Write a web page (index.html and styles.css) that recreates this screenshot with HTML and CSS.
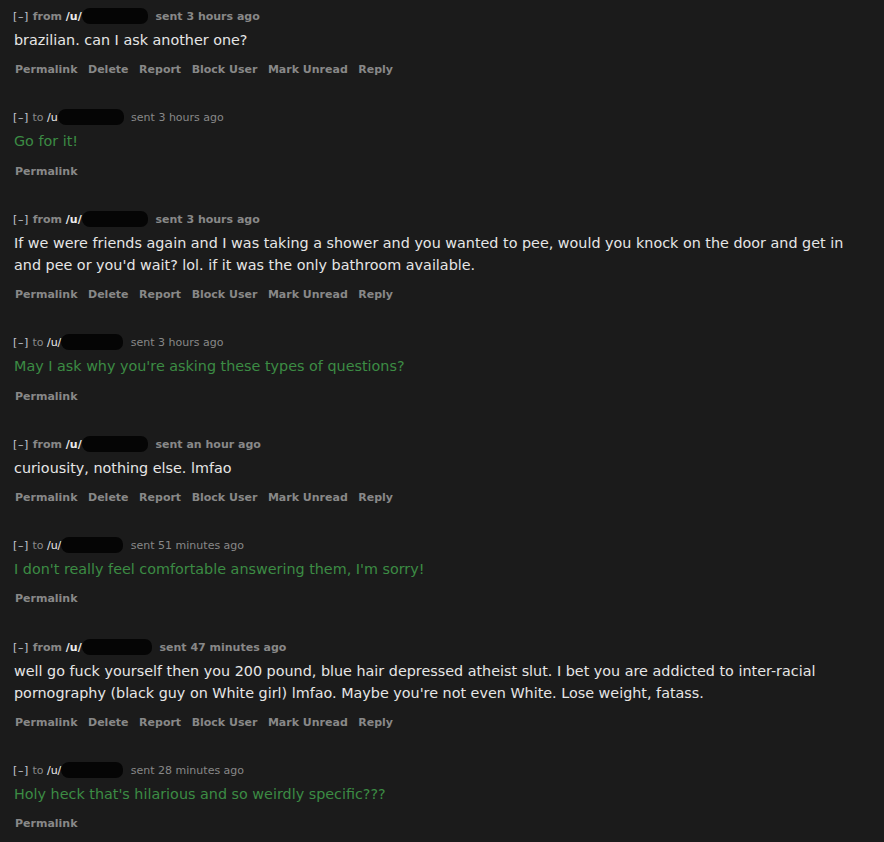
FILE: index.html
```html
<!DOCTYPE html>
<html lang="en">
<head>
    <meta charset="UTF-8">
    <title>Messages</title>
    <link rel="stylesheet" href="styles.css">
</head>
<body>
    <div class="thread">
        <div class="message unread">
            <p class="tagline"><span class="toggle">[&ndash;]</span> from <span class="author">/u/</span><span class="redact" style="width:66px"></span> sent 3 hours ago</p>
            <div class="md">brazilian. can I ask another one?</div>
            <ul class="buttons"><li>Permalink</li><li>Delete</li><li>Report</li><li>Block User</li><li>Mark Unread</li><li>Reply</li></ul>
        </div>

        <div class="message sent">
            <p class="tagline"><span class="toggle">[&ndash;]</span> to <span class="author">/u</span><span class="redact" style="width:66px"></span> sent 3 hours ago</p>
            <div class="md">Go for it!</div>
            <ul class="buttons"><li>Permalink</li></ul>
        </div>

        <div class="message unread">
            <p class="tagline"><span class="toggle">[&ndash;]</span> from <span class="author">/u/</span><span class="redact" style="width:66px"></span> sent 3 hours ago</p>
            <div class="md">If we were friends again and I was taking a shower and you wanted to pee, would you knock on the door and get in and pee or you'd wait? lol. if it was the only bathroom available.</div>
            <ul class="buttons"><li>Permalink</li><li>Delete</li><li>Report</li><li>Block User</li><li>Mark Unread</li><li>Reply</li></ul>
        </div>

        <div class="message sent">
            <p class="tagline"><span class="toggle">[&ndash;]</span> to <span class="author">/u/</span><span class="redact" style="width:62px"></span> sent 3 hours ago</p>
            <div class="md">May I ask why you're asking these types of questions?</div>
            <ul class="buttons"><li>Permalink</li></ul>
        </div>

        <div class="message unread">
            <p class="tagline"><span class="toggle">[&ndash;]</span> from <span class="author">/u/</span><span class="redact" style="width:66px"></span> sent an hour ago</p>
            <div class="md">curiousity, nothing else. lmfao</div>
            <ul class="buttons"><li>Permalink</li><li>Delete</li><li>Report</li><li>Block User</li><li>Mark Unread</li><li>Reply</li></ul>
        </div>

        <div class="message sent">
            <p class="tagline"><span class="toggle">[&ndash;]</span> to <span class="author">/u/</span><span class="redact" style="width:62px"></span> sent 51 minutes ago</p>
            <div class="md">I don't really feel comfortable answering them, I'm sorry!</div>
            <ul class="buttons"><li>Permalink</li></ul>
        </div>

        <div class="message unread">
            <p class="tagline"><span class="toggle">[&ndash;]</span> from <span class="author">/u/</span><span class="redact" style="width:70px"></span> sent 47 minutes ago</p>
            <div class="md">well go fuck yourself then you 200 pound, blue hair depressed atheist slut. I bet you are addicted to inter-racial pornography (black guy on White girl) lmfao. Maybe you're not even White. Lose weight, fatass.</div>
            <ul class="buttons"><li>Permalink</li><li>Delete</li><li>Report</li><li>Block User</li><li>Mark Unread</li><li>Reply</li></ul>
        </div>

        <div class="message sent">
            <p class="tagline"><span class="toggle">[&ndash;]</span> to <span class="author">/u/</span><span class="redact" style="width:62px"></span> sent 28 minutes ago</p>
            <div class="md">Holy heck that's hilarious and so weirdly specific???</div>
            <ul class="buttons"><li>Permalink</li></ul>
        </div>
    </div>
</body>
</html>
```

FILE: styles.css
```css
body {
    margin: 0;
    background: #1b1b1b;
    font-family: 'DejaVu Sans', Verdana, sans-serif;
}
.thread {
    padding: 8px 0 0 13px;
    width: 845px;
}
.message {
    margin-bottom: 31.2px;
}
.tagline {
    margin: 0;
    font-size: 11px;
    line-height: 16px;
    color: #888;
    white-space: nowrap;
}
.unread .tagline {
    font-weight: bold;
}
.toggle {
    color: #c2c8d0;
    font-weight: normal;
    letter-spacing: 0.6px;
}
.author {
    color: #ececec;
}
.redact {
    display: inline-block;
    height: 16px;
    vertical-align: -4px;
    margin-right: 4px;
    background: #050505;
    border-radius: 9px 8px 8px 9px;
}
.md {
    margin: 4px 0 0 1px;
    font-size: 14.35px;
    line-height: 22.2px;
    color: #e6e6e6;
}
.sent .md {
    color: #3c8c44;
}
.buttons {
    list-style: none;
    margin: 11px 0 0 2px;
    padding: 0;
    display: flex;
    gap: 10.5px;
    font-size: 11px;
    font-weight: bold;
    line-height: 16px;
    color: #888;
}
```
